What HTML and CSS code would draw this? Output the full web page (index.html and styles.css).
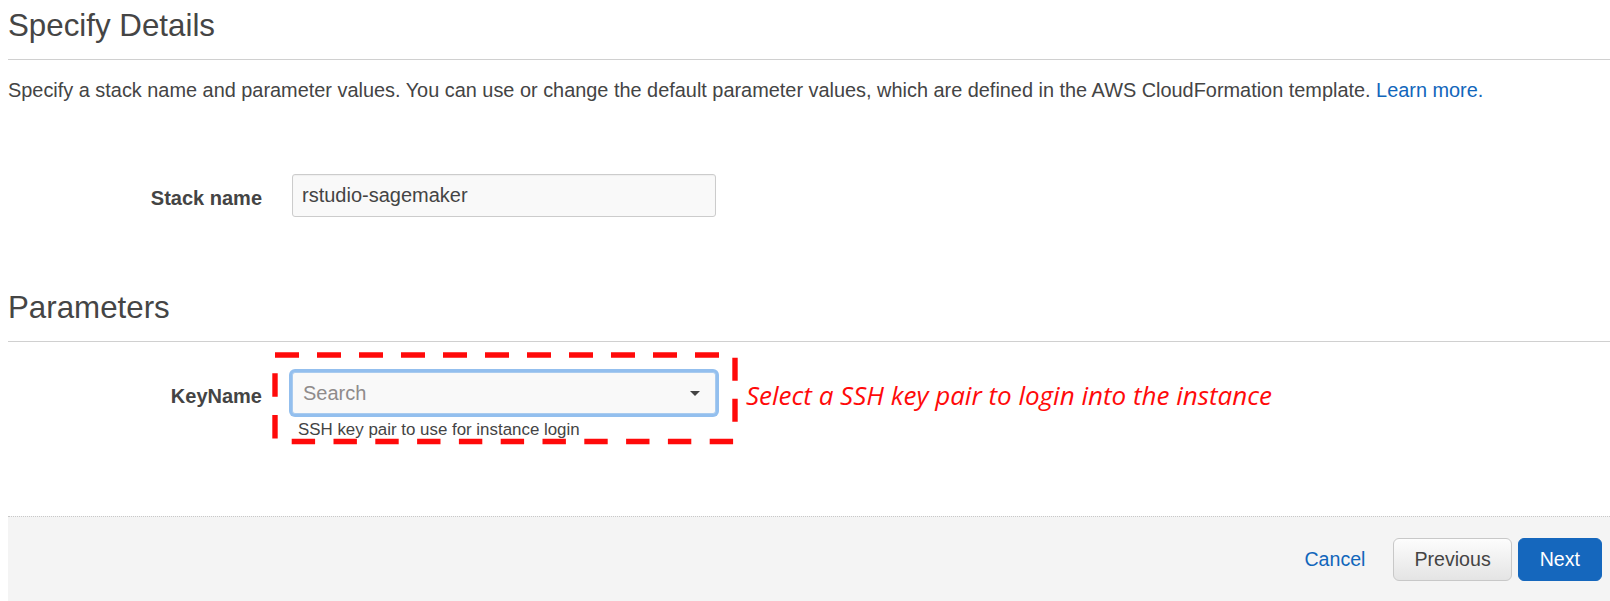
FILE: index.html
```html
<!DOCTYPE html>
<html lang="en">
<head>
<meta charset="utf-8">
<title>Specify Details</title>
<link rel="stylesheet" href="styles.css">
</head>
<body>
<main class="page">
  <header class="section-head">
    <h2>Specify Details</h2>
  </header>
  <p class="intro">Specify a stack name and parameter values. You can use or change the default parameter values, which are defined in the AWS CloudFormation template. <a href="#" class="link">Learn more.</a></p>

  <div class="field-row stack-row">
    <label class="field-label">Stack name</label>
    <div class="field-control">
      <div class="text-input">rstudio-sagemaker</div>
    </div>
  </div>

  <header class="section-head params-head">
    <h2>Parameters</h2>
  </header>

  <div class="field-row key-row">
    <label class="field-label">KeyName</label>
    <div class="field-control">
      <div class="select-input">
        <span class="placeholder">Search</span>
        <span class="caret"></span>
      </div>
      <div class="help">SSH key pair to use for instance login</div>
    </div>
    <div class="annotation-text">Select a SSH key pair to login into the instance</div>
    <svg class="annotation-box" width="468" height="94" viewBox="0 0 468 94" xmlns="http://www.w3.org/2000/svg">
      <g stroke="#ff0a0a" stroke-width="5.4" fill="none">
        <line x1="3" y1="3" x2="447" y2="3" stroke-dasharray="24 18"/>
        <line x1="3" y1="21.3" x2="3" y2="94" stroke-dasharray="23.4 18.3"/>
        <line x1="19.7" y1="89.5" x2="463.5" y2="89.5" stroke-dasharray="23.4 18.4"/>
        <line x1="463" y1="5.7" x2="463" y2="71" stroke-dasharray="23 18"/>
      </g>
    </svg>
  </div>
</main>

<footer class="wizard-footer">
  <a href="#" class="link cancel">Cancel</a>
  <button class="btn btn-secondary" type="button">Previous</button>
  <button class="btn btn-primary" type="button">Next</button>
</footer>
</body>
</html>
```

FILE: styles.css
```css
html, body {
  background: #ffffff;
}

body {
  margin: 0 0 0 8px;
  font-family: "Liberation Sans", Arial, Helvetica, sans-serif;
  color: #444444;
  font-size: 20px;
}

.page {
  display: flex;
  flex-direction: column;
}

.section-head {
  padding: 8px 0 15px 0;
  border-bottom: 1px solid #d0d0d0;
}

.section-head h2 {
  margin: 0;
  font-size: 31.3px;
  font-weight: normal;
  line-height: 36px;
  color: #454545;
}

.params-head {
  margin-top: 65px;
}

.intro {
  margin: 16px 0 0 0;
  line-height: 28px;
  font-size: 19.9px;
}

.link {
  color: #1166bb;
  text-decoration: none;
}

.field-row {
  display: flex;
  align-items: flex-start;
  gap: 30px;
  position: relative;
}

.stack-row {
  margin-top: 70px;
}

.key-row {
  margin-top: 30px;
}

.field-label {
  width: 254px;
  flex: none;
  box-sizing: border-box;
  text-align: right;
  font-weight: bold;
  font-size: 20px;
  line-height: 28px;
  padding-top: 9.5px;
  color: #444444;
}

.field-control {
  width: 424px;
  flex: none;
  display: flex;
  flex-direction: column;
}

.text-input {
  box-sizing: border-box;
  height: 43px;
  border: 1px solid #cccccc;
  border-radius: 3px;
  background: #f9f9f9;
  box-shadow: inset 0 1px 1px rgba(0, 0, 0, 0.04);
  padding: 0 9px;
  font-size: 20px;
  line-height: 41px;
  color: #444444;
}

.select-input {
  box-sizing: border-box;
  height: 42px;
  border: 1px solid #a9cbef;
  border-radius: 3px;
  background: #f9f9f9;
  box-shadow: 0 0 0 3px #93bfee;
  padding: 0 10px;
  display: flex;
  align-items: center;
  justify-content: space-between;
}

.placeholder {
  font-size: 20px;
  color: #8f8b8b;
}

.caret {
  width: 0;
  height: 0;
  border-left: 5px solid transparent;
  border-right: 5px solid transparent;
  border-top: 5px solid #444444;
  margin-right: 5px;
}

.help {
  margin-top: 6px;
  padding-left: 6px;
  font-size: 16.9px;
  line-height: 20px;
  color: #444444;
}

.annotation-text {
  padding-top: 8px;
  font-family: "Open Sans", "Liberation Sans", sans-serif;
  font-style: italic;
  font-size: 26px;
  line-height: 30px;
  color: #ff0a0a;
  white-space: nowrap;
}

.annotation-box {
  position: absolute;
  left: 264px;
  top: -20px;
  pointer-events: none;
}

.wizard-footer {
  margin-top: 76px;
  border-top: 1px dotted #c8c8c8;
  background: #f4f4f4;
  padding: 21px 8px 20px 0;
  display: flex;
  justify-content: flex-end;
  align-items: center;
}

.cancel {
  font-size: 19.6px;
  margin-right: 28px;
}

.btn {
  height: 43px;
  border-radius: 6px;
  font-family: "Liberation Sans", Arial, Helvetica, sans-serif;
  font-size: 19.6px;
  cursor: pointer;
}

.btn-secondary {
  padding: 0 20px;
  border: 1px solid #c8c8c8;
  background: linear-gradient(#fdfdfd, #e4e4e4);
  color: #444444;
}

.btn-primary {
  margin-left: 6px;
  padding: 0 21px;
  border: 1px solid #1567bd;
  background: #1567bd;
  color: #ffffff;
}
```
